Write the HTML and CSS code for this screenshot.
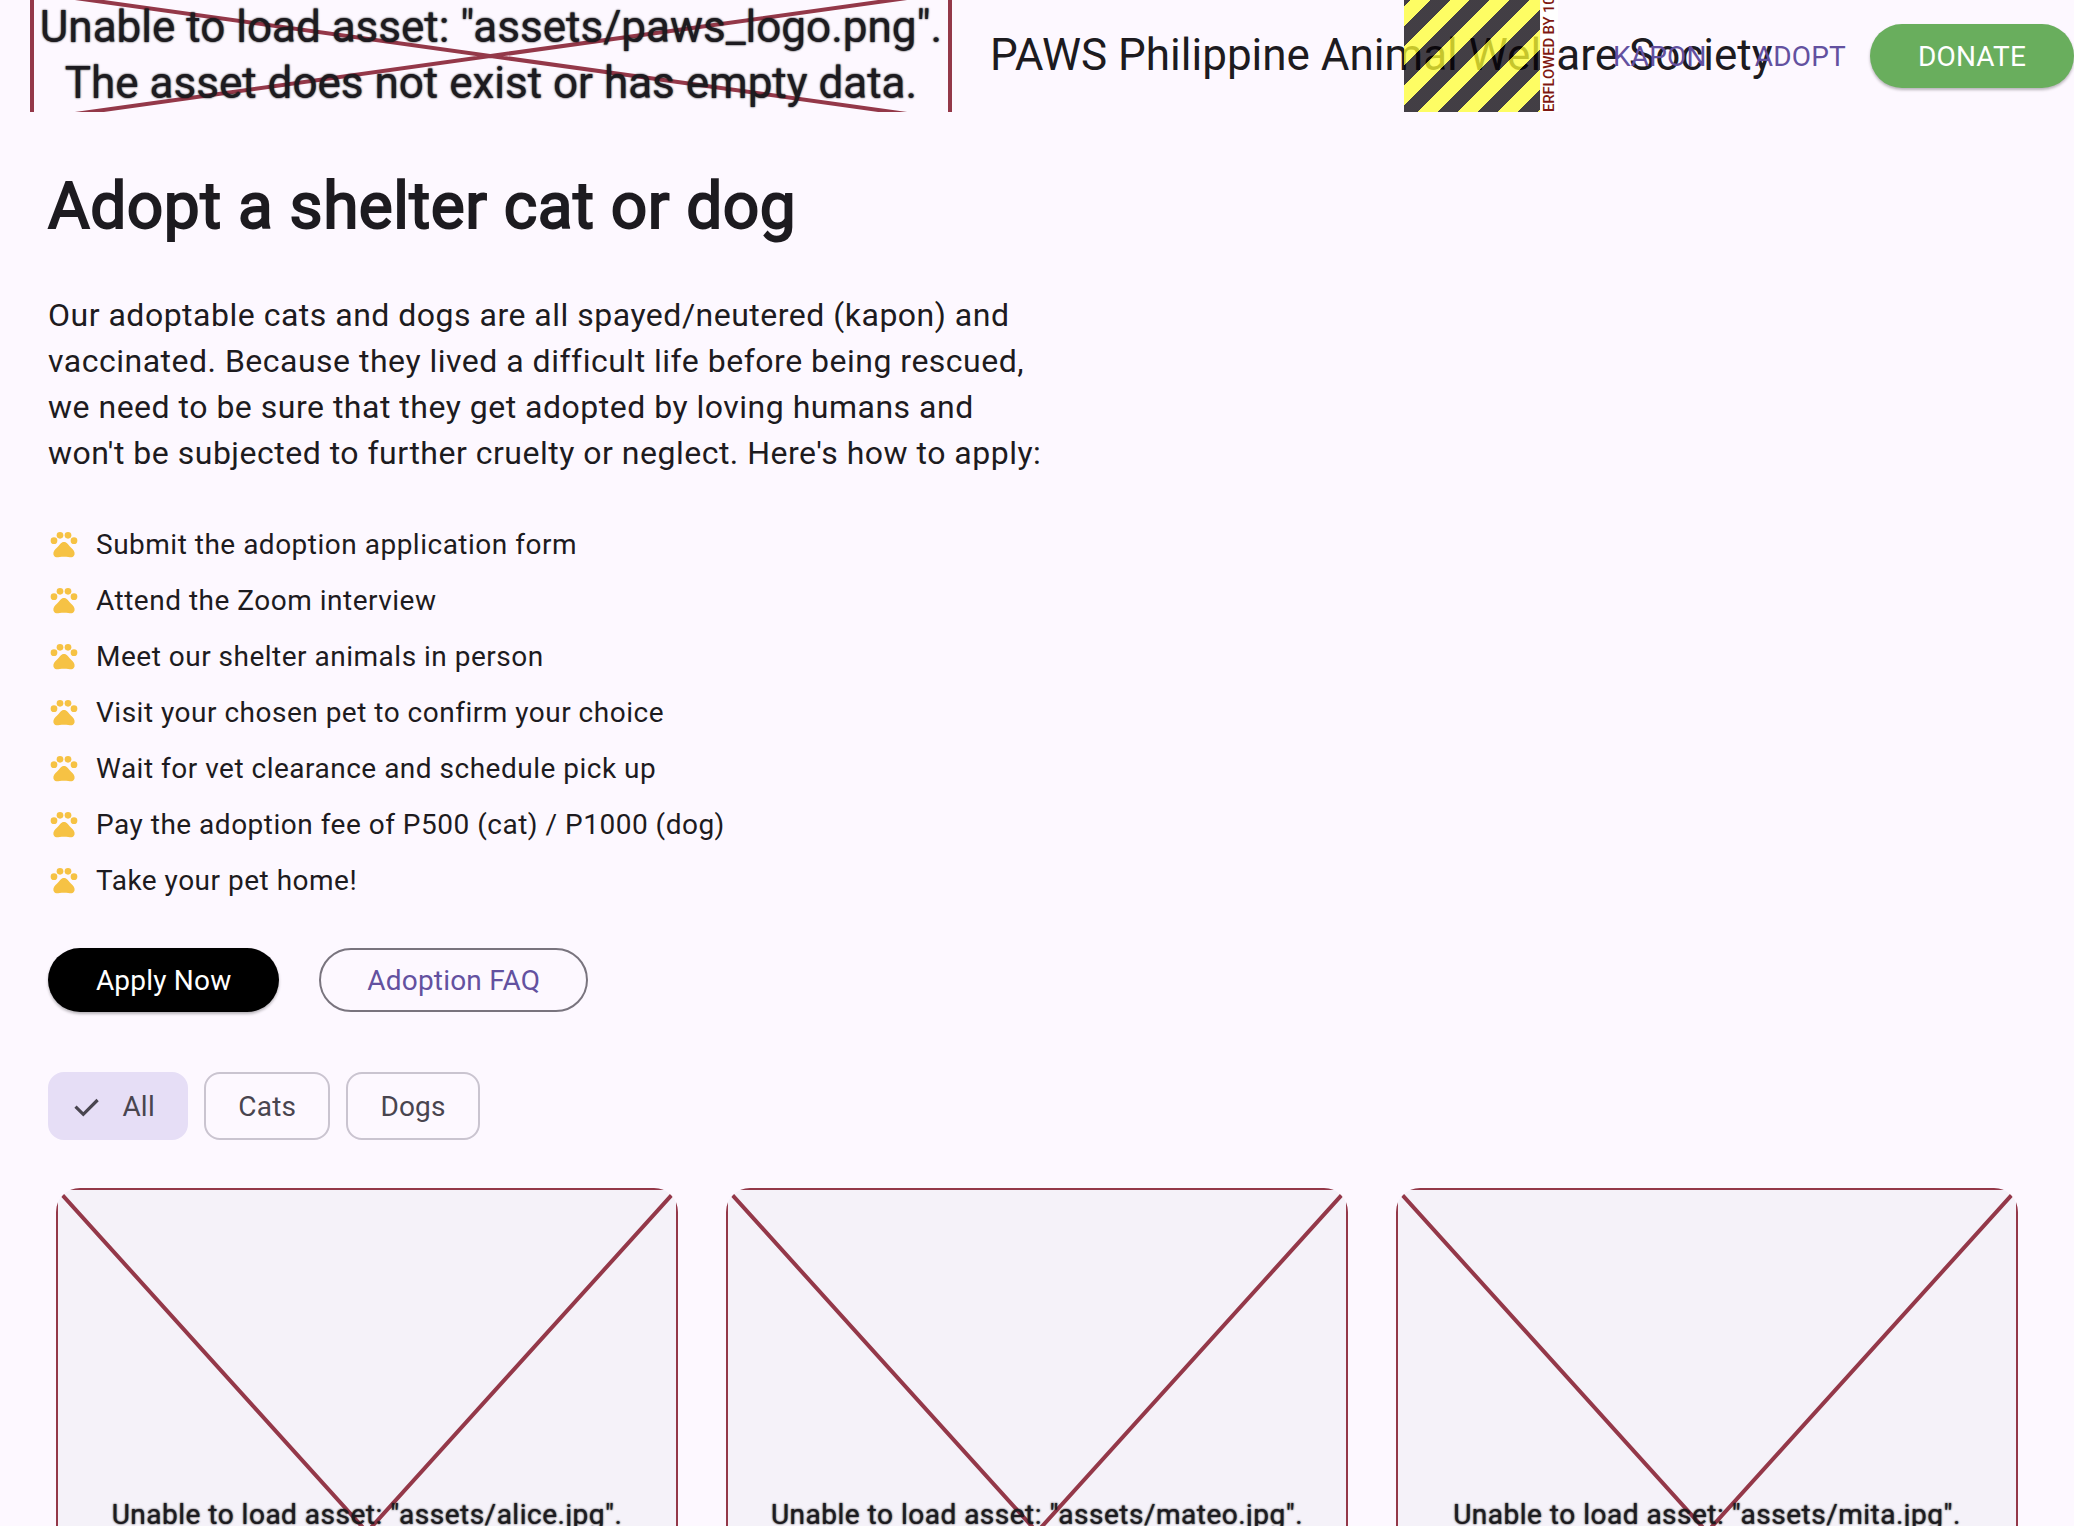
FILE: index.html
```html
<!DOCTYPE html>
<html lang="en">
<head>
<meta charset="utf-8">
<title>PAWS Philippine Animal Welfare Society</title>
<link rel="stylesheet" href="styles.css">
</head>
<body>
<svg class="defs" width="0" height="0">
  <symbol id="paw" viewBox="0 0 24 24">
    <circle cx="4.5" cy="9.5" r="2.5"/><circle cx="9" cy="5.5" r="2.5"/><circle cx="15" cy="5.5" r="2.5"/><circle cx="19.5" cy="9.5" r="2.5"/>
    <path d="M17.34 14.86c-.87-1.02-1.6-1.89-2.48-2.91-.46-.54-1.05-1.08-1.75-1.32-.11-.04-.22-.07-.33-.09-.25-.04-.52-.04-.78-.04s-.53 0-.79.05c-.11.02-.22.05-.33.09-.7.24-1.28.78-1.75 1.32-.87 1.02-1.6 1.89-2.48 2.91-1.31 1.31-2.92 2.76-2.62 4.79.29 1.02 1.02 2.03 2.33 2.32.73.15 3.06-.44 5.54-.44h.18c2.48 0 4.81.58 5.54.44 1.31-.29 2.04-1.31 2.33-2.32.31-2.04-1.3-3.49-2.61-4.8z"/>
  </symbol>
</svg>
<header class="appbar">
  <div class="brand">
    <div class="logo">
      <svg class="cross" viewBox="0 0 918 128" preserveAspectRatio="none"><path d="M0 0H918V128H0ZL918 128M918 0L0 128"/></svg>
      <p class="asset-error">Unable to load asset: "assets/paws_logo.png".<br>The asset does not exist or has empty data.</p>
    </div>
    <div class="title">PAWS Philippine Animal Welfare Society</div>
    <div class="overflow"><div class="stripes"></div><div class="overflow-label">ERFLOWED BY 10</div></div>
  </div>
  <nav class="nav">
    <a class="link">KAPON</a>
    <a class="link">ADOPT</a>
    <a class="btn donate">DONATE</a>
  </nav>
</header>
<main class="page">
  <h1>Adopt a shelter cat or dog</h1>
  <p class="intro">Our adoptable cats and dogs are all spayed/neutered (kapon) and<br>vaccinated. Because they lived a difficult life before being rescued,<br>we need to be sure that they get adopted by loving humans and<br>won't be subjected to further cruelty or neglect. Here's how to apply:</p>
  <ul class="steps">
    <li><svg><use href="#paw"/></svg>Submit the adoption application form</li>
    <li><svg><use href="#paw"/></svg>Attend the Zoom interview</li>
    <li><svg><use href="#paw"/></svg>Meet our shelter animals in person</li>
    <li><svg><use href="#paw"/></svg>Visit your chosen pet to confirm your choice</li>
    <li><svg><use href="#paw"/></svg>Wait for vet clearance and schedule pick up</li>
    <li><svg><use href="#paw"/></svg>Pay the adoption fee of P500 (cat) / P1000 (dog)</li>
    <li><svg><use href="#paw"/></svg>Take your pet home!</li>
  </ul>
  <div class="actions">
    <a class="btn apply">Apply Now</a>
    <a class="btn faq">Adoption FAQ</a>
  </div>
  <div class="chips">
    <span class="chip selected"><svg viewBox="0 0 36 36"><path d="M7.5 18.6L15.3 26.3L29.6 12"/></svg>All</span>
    <span class="chip cats">Cats</span>
    <span class="chip dogs">Dogs</span>
  </div>
  <div class="cards">
    <div class="card">
      <svg class="cross" viewBox="0 0 622 688" preserveAspectRatio="none"><path d="M0 0H622V688H0ZL622 688M622 0L0 688"/></svg>
      <p class="asset-error">Unable to load asset: "assets/alice.jpg".</p>
    </div>
    <div class="card">
      <svg class="cross" viewBox="0 0 622 688" preserveAspectRatio="none"><path d="M0 0H622V688H0ZL622 688M622 0L0 688"/></svg>
      <p class="asset-error">Unable to load asset: "assets/mateo.jpg".</p>
    </div>
    <div class="card">
      <svg class="cross" viewBox="0 0 622 688" preserveAspectRatio="none"><path d="M0 0H622V688H0ZL622 688M622 0L0 688"/></svg>
      <p class="asset-error">Unable to load asset: "assets/mita.jpg".</p>
    </div>
  </div>
</main>
</body>
</html>
```
FILE: styles.css
```css
* { box-sizing: border-box; }
html { overflow: hidden; }
body {
  margin: 0;
  height: 1526px;
  overflow: hidden;
  background: #fdf8ff;
  color: #1d1b20;
  font-family: Roboto, sans-serif;
  font-size: 28px;
}
h1, p, ul { margin: 0; padding: 0; }
.defs { position: absolute; }

.appbar { display: flex; height: 112px; overflow: hidden; }
.brand {
  position: relative;
  flex: none;
  display: flex;
  align-items: center;
  width: 1540px;
  padding-left: 32px;
  gap: 40px;
}
.logo { position: relative; flex: none; width: 918px; height: 128px; padding: 7px 0 9px; }
.cross { position: absolute; inset: 0; width: 100%; height: 100%; overflow: visible; }
.cross path { fill: none; stroke: #943849; stroke-width: 4; }
.asset-error { position: relative; text-align: center; white-space: nowrap; text-shadow: 0 0 2px #000; }
.logo .asset-error { font-size: 44px; line-height: 56px; }
.title { flex: none; width: 0; padding-bottom: 2px; font-size: 44px; line-height: 56px; white-space: nowrap; }
.overflow { position: absolute; left: 1404px; top: 0; height: 112px; display: flex; gap: 1px; }
.stripes {
  width: 136px;
  background: repeating-linear-gradient(135deg,
    rgba(4, 0, 6, 0.75) 0 4.243px,
    rgba(255, 255, 48, 0.75) 4.243px 18.385px,
    rgba(4, 0, 6, 0.75) 18.385px 28.284px);
}
.overflow-label {
  width: 17px;
  overflow: hidden;
  background: #fff;
  color: #7f1811;
  font-size: 15px;
  font-weight: 500;
  line-height: 17px;
  letter-spacing: -0.2px;
  white-space: nowrap;
  writing-mode: vertical-rl;
  transform: rotate(180deg);
}
.nav { position: relative; flex: 1; display: flex; align-items: center; justify-content: flex-end; }
.link { padding: 0 24px; color: #6351a0; letter-spacing: 0.2px; }

.btn {
  display: flex;
  align-items: center;
  justify-content: center;
  height: 64px;
  border-radius: 32px;
  letter-spacing: 0.2px;
}
.donate, .apply { color: #fff; box-shadow: 0 2px 3px rgba(0, 0, 0, 0.28); }
.donate { width: 204px; background: #69ae5d; }
.apply { width: 231.3px; background: #000; }
.faq { width: 269px; border: 2px solid #79747e; color: #6351a0; }

.page { padding: 57px 48px 0; }
h1 {
  font-size: 64px;
  font-weight: 400;
  line-height: 76px;
  letter-spacing: 0.48px;
  -webkit-text-stroke: 2px #1d1b20;
}
.intro { margin-top: 47px; font-size: 32px; line-height: 46px; letter-spacing: 0.5px; }
.steps { margin-top: 40px; list-style: none; }
.steps li { display: flex; align-items: center; gap: 16px; height: 56px; letter-spacing: 0.5px; }
.steps svg { width: 32px; height: 32px; fill: #f6c244; }
.actions { display: flex; gap: 40px; margin-top: 40px; }
.chips { display: flex; gap: 16px; margin-top: 60px; }
.chip {
  display: flex;
  align-items: center;
  justify-content: center;
  height: 68px;
  border: 2px solid #cac4d0;
  border-radius: 16px;
  color: #49454f;
  letter-spacing: 0.2px;
}
.selected { width: 140.3px; border-color: #e6def6; background: #e6def6; gap: 18px; padding-right: 13px; }
.selected svg { width: 36px; height: 36px; fill: none; stroke: #49454f; stroke-width: 3.2; }
.cats { width: 126px; }
.dogs { width: 133.5px; }
.cards { display: flex; gap: 48px; margin: 48px 8px 0; }
.card {
  position: relative;
  width: 622px;
  height: 338px;
  flex: none;
  border-radius: 24px 24px 0 0;
  overflow: hidden;
  background: #f5f2f9;
}
.card .cross { height: 688px; }
.card .asset-error { padding-top: 307px; line-height: 40px; letter-spacing: 0.5px; }
```
